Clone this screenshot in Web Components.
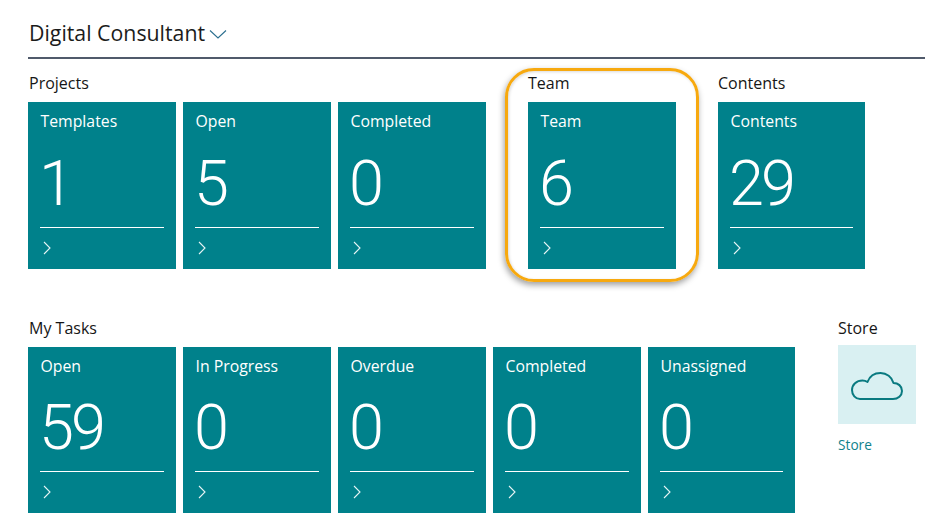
<!DOCTYPE html>
<html>
<head>
<meta charset="utf-8">
<title>Digital Consultant</title>
<style>
  html, body { margin: 0; height: 100%; background: #fff; overflow: hidden; }
  body { font-family: "Open Sans", "Liberation Sans", sans-serif; color: #212121; }
  .rows { display: flex; flex-direction: column; gap: 49px; padding: 0 0 0 28px; }
  .row { display: flex; gap: 42px; align-items: flex-start; }
  .row.short { gap: 43px; --tile-h: 166px; --value-top: 20px; }
</style>
</head>
<body>
<page-header>Digital Consultant</page-header>
<div class="rows">
  <div class="row">
    <tile-group title="Projects" inset>
      <cue-tile label="Templates" value="1"></cue-tile>
      <cue-tile label="Open" value="5"></cue-tile>
      <cue-tile label="Completed" value="0"></cue-tile>
    </tile-group>
    <tile-group title="Team" highlight>
      <cue-tile label="Team" value="6"></cue-tile>
    </tile-group>
    <tile-group title="Contents">
      <cue-tile label="Contents" value="29" style="--tile-w: 147px"></cue-tile>
    </tile-group>
  </div>
  <div class="row short">
    <tile-group title="My Tasks" inset>
      <cue-tile label="Open" value="59"></cue-tile>
      <cue-tile label="In Progress" value="0"></cue-tile>
      <cue-tile label="Overdue" value="0"></cue-tile>
      <cue-tile label="Completed" value="0"></cue-tile>
      <cue-tile label="Unassigned" value="0" style="--tile-w: 147px"></cue-tile>
    </tile-group>
    <tile-group title="Store" compact>
      <action-tile label="Store"></action-tile>
    </tile-group>
  </div>
</div>
<script>
class PageHeader extends HTMLElement {
  connectedCallback() {
    this.attachShadow({ mode: "open" })
    this.shadowRoot.innerHTML = `
      <style>
        :host { display: block; padding-left: 28px; margin-bottom: 14px; }
        .bar {
          height: 48px;
          display: flex;
          align-items: center;
          gap: 4px;
          padding: 9px 0 0 1px;
          border-bottom: 2px solid #505a6b;
        }
        .name { font-size: 21.3px; color: #1b1b1b; line-height: 1; }
        svg { display: block; margin-top: 2px; }
      </style>
      <div class="bar">
        <span class="name"><slot></slot></span>
        <svg width="18" height="10" viewBox="0 0 18 10" fill="none" stroke="#2b6f8f" stroke-width="1.1">
          <path d="M1 1.5 L9 9 L17 1.5"/>
        </svg>
      </div>
    `
  }
}

class TileGroup extends HTMLElement {
  connectedCallback() {
    this.attachShadow({ mode: "open" })
    const ring = this.hasAttribute("highlight") ? `<div class="ring"></div>` : ""
    this.shadowRoot.innerHTML = `
      <style>
        :host { display: block; position: relative; flex: none; }
        .title {
          font-size: 16px;
          font-weight: 500;
          line-height: 20px;
          margin-bottom: 9px;
          color: #161616;
        }
        :host([inset]) .title { padding-left: 1px; }
        :host([compact]) .title { margin-bottom: 7px; }
        .tiles { display: flex; gap: 7px; }
        .ring {
          position: absolute;
          left: -23px;
          top: -5px;
          width: 188px;
          height: 208px;
          border: 3px solid #f7a90f;
          border-radius: 29px;
          box-shadow: -1px 3px 6px rgba(0, 0, 0, .38), inset 1px 1px 3px rgba(0, 0, 0, .15);
          pointer-events: none;
        }
      </style>
      <div class="title">${this.getAttribute("title")}</div>
      <div class="tiles"><slot></slot></div>
      ${ring}
    `
  }
}

class CueTile extends HTMLElement {
  connectedCallback() {
    this.attachShadow({ mode: "open" })
    this.shadowRoot.innerHTML = `
      <style>
        :host {
          display: flex;
          flex-direction: column;
          box-sizing: border-box;
          width: var(--tile-w, 148px);
          height: var(--tile-h, 167px);
          padding: 8px 12px 0;
          background: #00818b;
          color: #fff;
        }
        .label { font-size: 15.8px; line-height: 22px; padding-left: .5px; }
        .value {
          font-family: Roboto, "Open Sans", sans-serif;
          font-size: 63px;
          font-weight: 300;
          letter-spacing: -3px;
          line-height: 62px;
          margin: var(--value-top, 21px) 0 0 -1px;
          height: 74px;
        }
        .line { height: 1px; background: #fff; flex: none; }
        svg { display: block; margin: 13px 0 0 3px; }
      </style>
      <div class="label">${this.getAttribute("label")}</div>
      <div class="value">${this.getAttribute("value")}</div>
      <div class="line"></div>
      <svg width="8" height="14" viewBox="0 0 8 14" fill="none" stroke="#e6f4f5" stroke-width="1.1">
        <path d="M1 1 L7 7 L1 13"/>
      </svg>
    `
  }
}

class ActionTile extends HTMLElement {
  connectedCallback() {
    this.attachShadow({ mode: "open" })
    this.shadowRoot.innerHTML = `
      <style>
        :host { display: block; width: 78px; }
        .box {
          height: 79px;
          background: #d9f0f2;
          display: flex;
          align-items: center;
          justify-content: center;
        }
        .label { font-size: 13.7px; line-height: 20px; margin-top: 11px; color: #10828c; }
        svg { display: block; margin-top: 3px; }
      </style>
      <div class="box">
        <svg width="52" height="30" viewBox="0 0 52 30" fill="none" stroke="#0a7a80" stroke-width="2" stroke-linecap="round" stroke-linejoin="round">
          <path d="M9 28 H42 C47 28 51 24.5 51 20 C51 15 47 12 42.5 12 C41 6 35.5 2 29.5 2 C23.5 2 18.5 5.5 16.5 11 C15 10 13.5 9.5 11.5 9.5 C5.5 9.5 1 13.5 1 19 C1 24 4.5 28 9 28 Z"/>
        </svg>
      </div>
      <div class="label">${this.getAttribute("label")}</div>
    `
  }
}

customElements.define("page-header", PageHeader)
customElements.define("tile-group", TileGroup)
customElements.define("cue-tile", CueTile)
customElements.define("action-tile", ActionTile)
</script>
</body>
</html>
